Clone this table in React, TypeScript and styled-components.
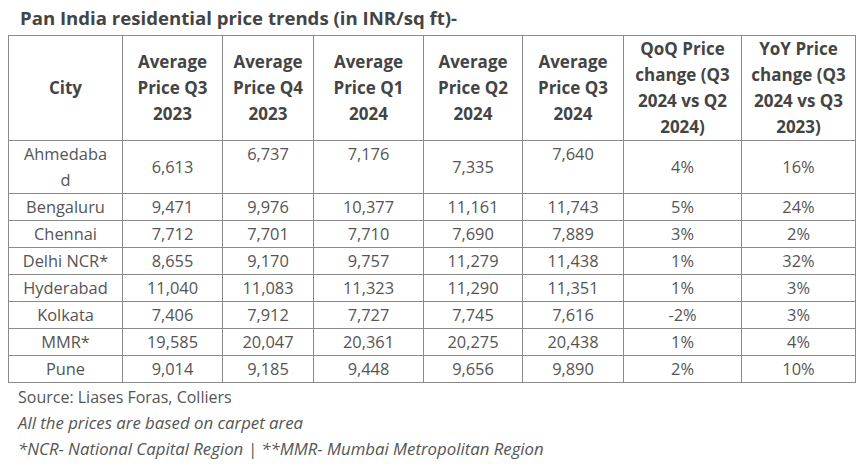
import styled, { createGlobalStyle } from "styled-components";

const GlobalStyle = createGlobalStyle`
  body {
    margin: 0;
    background: #ffffff;
    font-family: "Open Sans", "Liberation Sans", sans-serif;
    color: #444;
  }
`;

const Page = styled.div`
  width: 866px;
  height: 470px;
  padding: 5px 0 0 8px;
  box-sizing: border-box;
  overflow: hidden;
`;

const Title = styled.h3`
  margin: 0 0 5px 12px;
  font-size: 18.6px;
  line-height: 25px;
  font-weight: 700;
  color: #444;
`;

const Table = styled.table`
  width: 847px;
  table-layout: fixed;
  border-collapse: collapse;
  border: 1px solid #8a8a8a;
  font-size: 16.4px;
  line-height: 26px;
`;

const HeadCell = styled.th<{ $dark?: boolean }>`
  padding: 0 4px;
  border: 1px solid #8a8a8a;
  border-left-color: ${(p) => (p.$dark ? "#222" : "#8a8a8a")};
  font-size: 17px;
  font-weight: 700;
  color: #444;
  text-align: center;
  vertical-align: middle;
`;

const Cell = styled.td<{ $dark?: boolean; $top?: boolean }>`
  padding: 0 10px;
  border: 1px solid #8a8a8a;
  border-left-color: ${(p) => (p.$dark ? "#222" : "#8a8a8a")};
  color: #555;
  text-align: center;
  vertical-align: ${(p) => (p.$top ? "top" : "middle")};
  overflow-wrap: anywhere;
`;

const Notes = styled.div`
  padding: 1px 0 0 10px;
  line-height: 26px;
  color: #555;
`;

const Note = styled.div<{ $italic?: boolean }>`
  font-size: ${(p) => (p.$italic ? "16.8px" : "16px")};
  font-style: ${(p) => (p.$italic ? "italic" : "normal")};
`;

const widths = [114, 100, 91, 110, 99, 101, 118, 114];

const headers = [
  "City",
  "Average Price Q3 2023",
  "Average Price Q4 2023",
  "Average Price Q1 2024",
  "Average Price Q2 2024",
  "Average Price Q3 2024",
  "QoQ Price change (Q3 2024 vs Q2 2024)",
  "YoY Price change (Q3 2024 vs Q3 2023)",
];

const rows = [
  ["Ahmedabad", "6,613", "6,737", "7,176", "7,335", "7,640", "4%", "16%"],
  ["Bengaluru", "9,471", "9,976", "10,377", "11,161", "11,743", "5%", "24%"],
  ["Chennai", "7,712", "7,701", "7,710", "7,690", "7,889", "3%", "2%"],
  ["Delhi NCR*", "8,655", "9,170", "9,757", "11,279", "11,438", "1%", "32%"],
  ["Hyderabad", "11,040", "11,083", "11,323", "11,290", "11,351", "1%", "3%"],
  ["Kolkata", "7,406", "7,912", "7,727", "7,745", "7,616", "-2%", "3%"],
  ["MMR*", "19,585", "20,047", "20,361", "20,275", "20,438", "1%", "4%"],
  ["Pune", "9,014", "9,185", "9,448", "9,656", "9,890", "2%", "10%"],
];

// cells in the first row that sit at the top instead of the middle
const topCells = [0, 2, 3, 5];

export default function App() {
  return (
    <Page>
      <GlobalStyle />
      <Title>Pan India residential price trends (in INR/sq ft)-</Title>
      <Table>
        <colgroup>
          {widths.map((w, i) => (
            <col key={i} style={{ width: w }} />
          ))}
        </colgroup>
        <thead>
          <tr>
            {headers.map((h, i) => (
              <HeadCell key={i} $dark={i >= 1 && i <= 4}>
                {h}
              </HeadCell>
            ))}
          </tr>
        </thead>
        <tbody>
          {rows.map((row, r) => (
            <tr key={r}>
              {row.map((v, c) => (
                <Cell key={c} $dark={c >= 1 && c <= 4} $top={r === 0 && topCells.includes(c)}>
                  {v}
                </Cell>
              ))}
            </tr>
          ))}
        </tbody>
      </Table>
      <Notes>
        <Note>Source: Liases Foras, Colliers</Note>
        <Note $italic>All the prices are based on carpet area</Note>
        <Note $italic>*NCR- National Capital Region | **MMR- Mumbai Metropolitan Region</Note>
      </Notes>
    </Page>
  );
}
